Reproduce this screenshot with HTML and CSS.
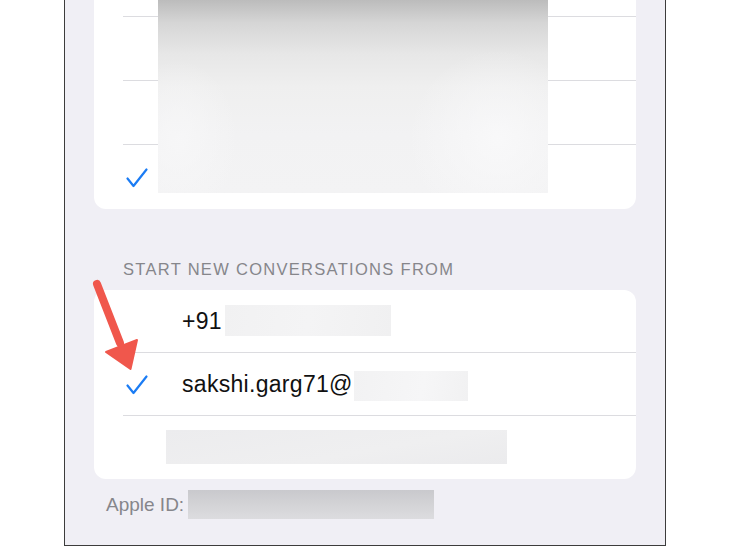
FILE: index.html
```html
<!DOCTYPE html>
<html lang="en">
<head>
    <meta charset="UTF-8">
    <meta name="viewport" content="width=device-width, initial-scale=1.0">
    <title>Send &amp; Receive</title>
    <link rel="stylesheet" href="styles.css">
</head>
<body>
    <div class="phone">
        <!-- addresses you can be reached at -->
        <div class="card card-top">
            <div class="row"><div class="row-inner"></div></div>
            <div class="row"><div class="row-inner"></div></div>
            <div class="row"><div class="row-inner"></div></div>
            <div class="row last">
                <div class="row-inner">
                    <svg class="check" width="22" height="20" viewBox="0 0 22 20">
                        <polyline points="1.5,10.5 7.5,18 20.5,1.5" fill="none" stroke="#1b7cf4" stroke-width="2.2" stroke-linecap="round" stroke-linejoin="round"/>
                    </svg>
                </div>
            </div>
            <div class="blur-photo"></div>
        </div>

        <div class="section-title">START NEW CONVERSATIONS FROM</div>

        <div class="card">
            <div class="row">
                <div class="row-inner">
                    <span class="value">+91</span><span class="blur blur-phone"></span>
                </div>
            </div>
            <div class="row">
                <div class="row-inner">
                    <svg class="check" width="22" height="20" viewBox="0 0 22 20">
                        <polyline points="1.5,10.5 7.5,18 20.5,1.5" fill="none" stroke="#1b7cf4" stroke-width="2.2" stroke-linecap="round" stroke-linejoin="round"/>
                    </svg>
                    <span class="value">sakshi.garg71@</span><span class="blur blur-mail"></span>
                </div>
            </div>
            <div class="row last">
                <div class="row-inner">
                    <span class="blur blur-other"></span>
                </div>
            </div>
        </div>

        <div class="apple-id">
            <span>Apple ID:</span><span class="blur blur-id"></span>
        </div>
    </div>

    <svg class="pointer" width="730" height="546" viewBox="0 0 730 546">
        <line x1="97" y1="284" x2="120" y2="343" stroke="#f0574c" stroke-width="8" stroke-linecap="round"/>
        <polygon points="130.5,369 106,352 137,340" fill="#f0574c" stroke="#f0574c" stroke-width="2" stroke-linejoin="round"/>
    </svg>
</body>
</html>
```

FILE: styles.css
```css
* {
    margin: 0;
    padding: 0;
    box-sizing: border-box;
}

body {
    background: #fff;
    height: 546px;
    overflow: hidden;
    position: relative;
    font-family: 'Liberation Sans', Arial, sans-serif;
}

.phone {
    margin-left: 64px;
    width: 602px;
    height: 546px;
    background: #f0eff5;
    border-left: 1px solid #3c3c3c;
    border-right: 1px solid #3c3c3c;
    border-bottom: 1px solid #3c3c3c;
    padding: 0 29px;
    overflow: hidden;
}

.card {
    background: #fff;
    border-radius: 12px;
    position: relative;
}

.card-top {
    margin-top: -47px;
}

.row {
    height: 64px;
    padding-left: 29px;
}

.row-inner {
    height: 100%;
    display: flex;
    align-items: center;
    border-bottom: 1px solid #dcdce0;
}

.row.last .row-inner {
    border-bottom: none;
}

.card:not(.card-top) .row {
    height: 63px;
}

.check {
    flex: none;
    margin-left: 3px;
    margin-top: 2px;
}

.value {
    font-size: 23px;
    letter-spacing: 0.3px;
    color: #111;
}

.check + .value {
    margin-left: 34px;
}

.row-inner > .value:first-child {
    margin-left: 59px;
}

.blur {
    display: inline-block;
    flex: none;
}

.blur-phone {
    width: 166px;
    height: 31px;
    margin-left: 3px;
    margin-top: -1px;
    background: linear-gradient(100deg, #f1f1f2 0%, #f4f4f5 50%, #f0f0f1 100%);
}

.blur-mail {
    width: 114px;
    height: 30px;
    margin-left: 1px;
    margin-top: 4px;
    background: linear-gradient(100deg, #f2f2f3 0%, #f6f6f7 60%, #f1f1f2 100%);
}

.blur-other {
    width: 341px;
    height: 34px;
    margin-left: 43px;
    margin-top: -2px;
    background: linear-gradient(170deg, #ececee 0%, #efeff0 60%, #ebebed 100%);
}

.blur-photo {
    position: absolute;
    left: 64px;
    top: 47px;
    width: 390px;
    height: 193px;
    background:
        radial-gradient(ellipse 60px 80px at 20px 140px, rgba(247, 247, 248, 0.9), rgba(247, 247, 248, 0)),
        radial-gradient(ellipse 90px 90px at 340px 140px, rgba(249, 249, 250, 0.9), rgba(249, 249, 250, 0)),
        linear-gradient(to bottom, #bcbcbc 0%, #d6d6d6 12%, #e7e7e7 28%, #efefef 45%, #f2f2f3 70%, #f3f3f4 100%);
}

.section-title {
    margin-top: 50px;
    margin-bottom: 11px;
    padding-left: 29px;
    font-size: 16.5px;
    line-height: 20px;
    letter-spacing: 1.3px;
    color: #86868b;
}

.apple-id {
    display: flex;
    align-items: center;
    margin-top: 11px;
    padding-left: 12px;
    font-size: 19px;
    color: #86868b;
}

.blur-id {
    width: 246px;
    height: 29px;
    margin-left: 4px;
    background: linear-gradient(to bottom, #c9c9cd 0%, #d3d3d6 50%, #dcdcdf 100%);
}

.pointer {
    position: absolute;
    left: 0;
    top: 0;
    pointer-events: none;
}
```
